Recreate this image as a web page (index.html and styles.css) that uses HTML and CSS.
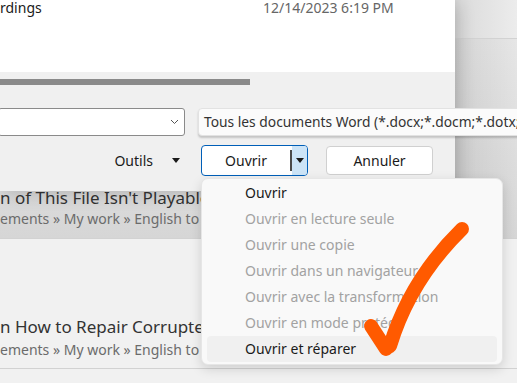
FILE: index.html
```html
<!DOCTYPE html>
<html lang="fr">
<head>
<meta charset="UTF-8">
<meta name="viewport" content="width=device-width, initial-scale=1.0">
<title>Ouvrir</title>
<link rel="stylesheet" href="styles.css">
</head>
<body>

<div class="screen">

    <!-- Word backstage, behind the dialog -->
    <div class="backstage">
        <div class="recent recent-top"></div>
        <div class="recent recent-hover">
            <div class="doc-title">n of This File Isn't Playable</div>
            <div class="doc-path">ements » My work » English to</div>
        </div>
        <div class="recent recent-last">
            <div class="doc-title">n How to Repair Corrupted</div>
            <div class="doc-path">ements » My work » English to</div>
        </div>
    </div>

    <!-- Open file dialog -->
    <div class="dialog">
        <div class="files">
            <div class="file-row">
                <span class="file-name">rdings</span>
                <span class="file-date">12/14/2023 6:19 PM</span>
            </div>
        </div>
        <div class="hscroll"><div class="thumb"></div></div>
        <div class="name-row">
            <div class="name-box">
                <svg class="chevron" width="9" height="6" viewBox="0 0 9 6"><path d="M1 1l3.5 3.5L8 1" fill="none" stroke="#555" stroke-width="1"/></svg>
            </div>
            <div class="type-box">Tous les documents Word (*.docx;*.docm;*.dotx;*.dotm)</div>
        </div>
        <div class="button-row">
            <div class="tools">Outils <span class="caret"></span></div>
            <div class="split">
                <span class="split-main">Ouvrir</span>
                <span class="split-drop"><span class="caret"></span></span>
            </div>
            <div class="btn">Annuler</div>
        </div>
    </div>

    <!-- Dropdown of the Ouvrir button -->
    <ul class="menu">
        <li>Ouvrir</li>
        <li class="off">Ouvrir en lecture seule</li>
        <li class="off">Ouvrir une copie</li>
        <li class="off">Ouvrir dans un navigateur</li>
        <li class="off">Ouvrir avec la transformation</li>
        <li class="off">Ouvrir en mode protégé</li>
        <li class="hover">Ouvrir et réparer</li>
    </ul>

    <!-- hand drawn annotation -->
    <svg class="scribble" width="517" height="383" viewBox="0 0 517 383">
        <path d="M462 229Q410 280 390 346" fill="none" stroke="#ff5a00" stroke-width="14" stroke-linecap="round"/>
        <path d="M371 326L386 349" fill="none" stroke="#ff5a00" stroke-width="14" stroke-linecap="round"/>
    </svg>

</div>

</body>
</html>
```

FILE: styles.css
```css
body {
    margin: 0;
    padding: 0;
    background-color: #f3f3f3;
    font-family: "Noto Sans", sans-serif;
    color: #1a1a1a;
}

.screen {
    position: relative;
    width: 517px;
    height: 383px;
    overflow: hidden;
    display: grid;
    grid-template-columns: 455px 62px;
    grid-template-rows: 191px 192px;
}

/* ---------- backstage ---------- */

.backstage {
    grid-area: 1 / 1 / 3 / 3;
    background-color: #f1f1f1;
}

.recent {
    display: flex;
    flex-direction: column;
    justify-content: flex-end;
    border-bottom: 1px solid #d2d2d2;
    box-sizing: border-box;
}

.recent-top {
    height: 39px;
    background: linear-gradient(to right, #d6d6d6 455px, #dcdcdc 462px, #ececec 517px);
}

.recent-hover {
    height: 200px;
    padding-bottom: 9px;
    background:
        linear-gradient(to right, transparent 455px, rgba(0, 0, 0, 0.1) 455px, rgba(0, 0, 0, 0.07) 462px, rgba(0, 0, 0, 0) 517px),
        linear-gradient(#e6e6e6, #dadada 80%, #d6d6d6);
}

.recent-last {
    height: 130px;
    padding-bottom: 8px;
}

.recent-last .doc-title {
    margin-bottom: 2px;
}

.doc-title {
    font-size: 17px;
    line-height: 22px;
    color: #333333;
    white-space: nowrap;
}

.doc-path {
    font-size: 14px;
    line-height: 20px;
    color: #6b6b6b;
    white-space: nowrap;
}

/* ---------- dialog ---------- */

.dialog {
    grid-area: 1 / 1 / 2 / 2;
    z-index: 1;
    background-color: #f0f0f0;
    box-shadow: 4px 4px 16px rgba(0, 0, 0, 0.16);
    font-size: 14px;
}

.files {
    height: 72px;
    background-color: #ffffff;
}

.file-row {
    display: grid;
    grid-template-columns: 263px auto;
    line-height: 15px;
}

.file-date {
    color: #666666;
}

.hscroll {
    height: 36px;
    padding-top: 7px;
    box-sizing: border-box;
}

.thumb {
    width: 250px;
    height: 6px;
    background-color: #8a8a8a;
}

.name-row {
    display: flex;
    height: 28px;
}

.name-box {
    flex: 0 0 auto;
    width: 187px;
    margin-left: -2px;
    box-sizing: border-box;
    border: 1px solid #8a8a8a;
    border-radius: 3px;
    background-color: #ffffff;
    display: flex;
    align-items: center;
    justify-content: flex-end;
    padding-right: 5px;
}

.type-box {
    flex: 0 0 auto;
    margin-left: 13px;
    width: 340px;
    box-sizing: border-box;
    border: 1px solid #e2e2e2;
    border-radius: 4px;
    background-color: #fbfbfb;
    box-shadow: 0 2px 2px rgba(0, 0, 0, 0.18);
    padding-left: 5px;
    font-size: 13.8px;
    line-height: 26px;
    color: #333333;
    white-space: nowrap;
    overflow: hidden;
}

.button-row {
    display: flex;
    align-items: center;
    justify-content: flex-end;
    margin-top: 9px;
    height: 31px;
    padding-right: 22px;
}

.caret {
    display: inline-block;
    width: 0;
    height: 0;
    border-left: 4px solid transparent;
    border-right: 4px solid transparent;
    border-top: 5px solid #1a1a1a;
    vertical-align: middle;
}

.tools {
    display: flex;
    align-items: center;
    gap: 19px;
    margin-right: 21px;
}

.split {
    display: flex;
    width: 107px;
    height: 31px;
    box-sizing: border-box;
    border: 1px solid #005fb8;
    border-radius: 4px;
    overflow: hidden;
    background-color: #ffffff;
}

.split-main {
    flex: 1;
    display: flex;
    align-items: center;
    justify-content: center;
    border-right: 2px solid #4a4a4a;
    margin: 4px 0;
}

.split-drop {
    width: 15px;
    display: flex;
    align-items: center;
    justify-content: center;
    background-color: #cce4f7;
}

.btn {
    width: 107px;
    height: 29px;
    margin-left: 18px;
    box-sizing: border-box;
    border: 1px solid #d0d0d0;
    border-radius: 4px;
    background-color: #ffffff;
    display: flex;
    align-items: center;
    justify-content: center;
}

/* ---------- dropdown menu ---------- */

.menu {
    position: absolute;
    left: 201px;
    top: 178px;
    width: 302px;
    z-index: 2;
    margin: 0;
    padding: 1px 0 2px;
    list-style: none;
    box-sizing: border-box;
    border: 1px solid #e6e6e6;
    border-radius: 7px;
    background-color: #f9f9f9;
    box-shadow: 0 4px 12px rgba(0, 0, 0, 0.14);
    font-size: 14px;
}

.menu li {
    height: 26px;
    line-height: 26px;
    margin: 0 5px;
    padding-left: 38px;
    border-radius: 4px;
    white-space: nowrap;
}

.menu li.off {
    color: #a2a2a2;
}

.menu li.hover {
    background-color: #f0f0f0;
}

.scribble {
    position: absolute;
    left: 0;
    top: 0;
    z-index: 3;
}
```
